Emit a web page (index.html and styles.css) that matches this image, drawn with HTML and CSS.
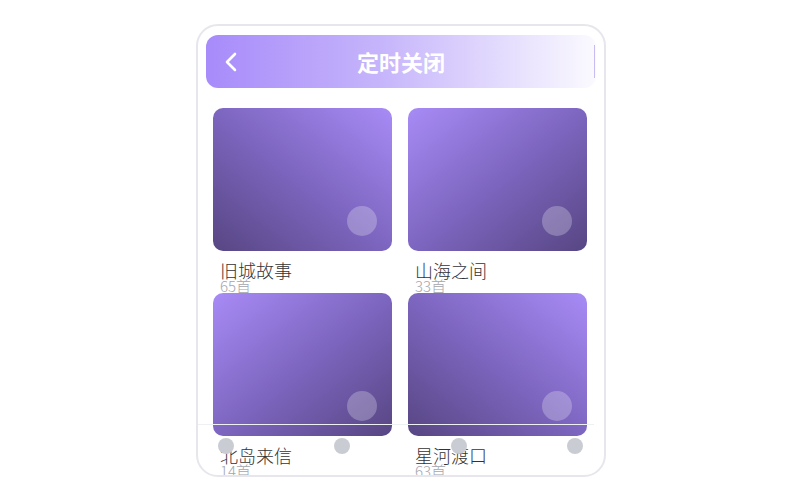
FILE: index.html
```html
<!DOCTYPE html>
<html lang="zh">
<head>
<meta charset="utf-8">
<title>定时关闭</title>
<link rel="stylesheet" href="styles.css">
</head>
<body>
<div class="phone">
  <header class="topbar">
    <span class="back">
      <svg width="14" height="20" viewBox="0 0 14 20"><path d="M11 2 L3 10 L11 18" fill="none" stroke="#fff" stroke-width="2.6" stroke-linecap="round" stroke-linejoin="round"/></svg>
    </span>
    <h1 class="title">定时关闭</h1>
    <span class="edge"></span>
  </header>
  <main class="grid">
    <div class="item">
      <div class="cover tr"><span class="dot"></span></div>
      <div class="name">旧城故事</div>
      <div class="count">65首</div>
    </div>
    <div class="item">
      <div class="cover tl"><span class="dot"></span></div>
      <div class="name">山海之间</div>
      <div class="count">33首</div>
    </div>
    <div class="item">
      <div class="cover tl"><span class="dot"></span></div>
      <div class="name">北岛来信</div>
      <div class="count">14首</div>
    </div>
    <div class="item">
      <div class="cover tr"><span class="dot"></span></div>
      <div class="name">星河渡口</div>
      <div class="count">63首</div>
    </div>
  </main>
  <nav class="tabs">
    <span class="tab"></span>
    <span class="tab"></span>
    <span class="tab"></span>
    <span class="tab"></span>
  </nav>
</div>
</body>
</html>
```
FILE: styles.css
```css
html, body {
  margin: 0;
  padding: 0;
  background: #ffffff;
  font-family: "Noto Sans CJK SC", "Noto Sans", sans-serif;
}

.phone {
  position: relative;
  box-sizing: border-box;
  width: 410px;
  height: 453px;
  margin: 24px 0 0 196px;
  border: 2px solid #e6e6ec;
  border-radius: 22px;
  padding: 9px 8px;
  overflow: hidden;
  background: #fff;
}

.topbar {
  height: 53px;
  border-radius: 12px;
  background: linear-gradient(90deg, #a78bfa 0%, #c6b5fb 45%, #fbfaff 100%);
  display: grid;
  grid-template-columns: 1fr auto 1fr;
  align-items: center;
}

.back {
  display: flex;
  align-items: center;
  padding-left: 18px;
}

.title {
  margin: 0;
  font-size: 22px;
  font-weight: 700;
  color: #fff;
  line-height: 53px;
}

.edge {
  justify-self: end;
  width: 1px;
  height: 33px;
  margin-right: 1px;
  background: #c8bdf3;
}

.grid {
  display: grid;
  grid-template-columns: 179px 179px;
  column-gap: 16px;
  padding: 20px 7px 0;
}

.item {
  display: flex;
  flex-direction: column;
}

.cover {
  position: relative;
  height: 143px;
  border-radius: 10px;
}

.cover.tr {
  background: linear-gradient(to bottom left, #a88bf6 0%, #7d66c0 50%, #574683 100%);
}

.cover.tl {
  background: linear-gradient(to bottom right, #a88bf6 0%, #7d66c0 50%, #574683 100%);
}

.dot {
  position: absolute;
  right: 15px;
  bottom: 15px;
  width: 30px;
  height: 30px;
  border-radius: 50%;
  background: rgba(255, 255, 255, 0.25);
}

.name {
  margin-top: 10px;
  padding-left: 7px;
  font-size: 18px;
  font-weight: 300;
  line-height: 18px;
  color: #333;
}

.count {
  padding-left: 7px;
  font-size: 15px;
  font-weight: 300;
  line-height: 14px;
  color: #a3a6ad;
}

.tabs {
  position: absolute;
  left: 0;
  right: 10px;
  bottom: 0;
  height: 51px;
  box-sizing: border-box;
  border-top: 1px solid #eef0f3;
  display: flex;
  justify-content: space-between;
  align-items: flex-start;
  padding: 13px 11px 0 20px;
}

.tab {
  width: 16px;
  height: 16px;
  border-radius: 50%;
  background: #c9ccd2;
}
```
